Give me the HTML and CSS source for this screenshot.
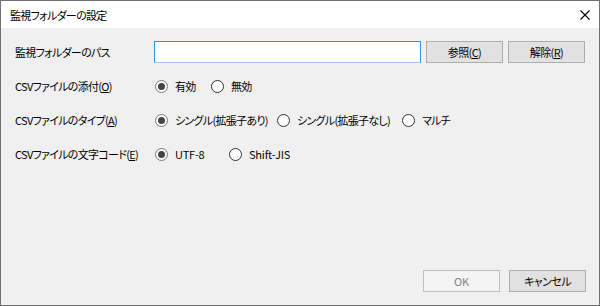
FILE: index.html
```html
<!DOCTYPE html>
<html lang="ja">
<head>
    <meta charset="UTF-8">
    <title>監視フォルダーの設定</title>
    <link rel="stylesheet" href="styles.css">
</head>
<body>
    <div class="dialog">
        <div class="titlebar">
            <span class="title">監視フォルダーの設定</span>
            <svg class="close" width="10" height="10" viewBox="0 0 10 10">
                <path d="M0.5 0.5 L9.5 9.5 M9.5 0.5 L0.5 9.5" stroke="#000" stroke-width="1.1" fill="none"/>
            </svg>
        </div>

        <div class="content">
            <div class="form">
                <div class="row">
                    <span class="label">監視フォルダーのパス</span>
                    <div class="controls">
                        <input class="path-input" type="text">
                        <button class="btn">参照(<u>C</u>)</button>
                        <button class="btn">解除(<u>R</u>)</button>
                    </div>
                </div>

                <div class="row">
                    <span class="label">CSVファイルの添付(<u>O</u>)</span>
                    <div class="controls">
                        <label class="choice w-yes"><span class="radio checked"></span>有効</label>
                        <label class="choice"><span class="radio"></span>無効</label>
                    </div>
                </div>

                <div class="row">
                    <span class="label">CSVファイルのタイプ(<u>A</u>)</span>
                    <div class="controls">
                        <label class="choice w-single1"><span class="radio checked"></span>シングル(拡張子あり)</label>
                        <label class="choice w-single2"><span class="radio"></span>シングル(拡張子なし)</label>
                        <label class="choice"><span class="radio"></span>マルチ</label>
                    </div>
                </div>

                <div class="row">
                    <span class="label">CSVファイルの文字コード(<u>E</u>)</span>
                    <div class="controls">
                        <label class="choice w-utf"><span class="radio checked"></span><span class="latin">UTF-8</span></label>
                        <label class="choice"><span class="radio"></span><span class="latin">Shift-JIS</span></label>
                    </div>
                </div>
            </div>

            <div class="footer">
                <button class="btn btn-disabled"><span class="latin">OK</span></button>
                <button class="btn">キャンセル</button>
            </div>
        </div>
    </div>
</body>
</html>
```

FILE: styles.css
```css
* {
    margin: 0;
    padding: 0;
    box-sizing: border-box;
}

body {
    font-family: "Noto Sans CJK JP", "Noto Sans", sans-serif;
    font-size: 11px;
    letter-spacing: -0.7px;
    font-feature-settings: "palt";
    color: #000;
    background: #fff;
}

.latin {
    letter-spacing: -0.2px;
}

.dialog {
    width: 600px;
    height: 306px;
    border: 1px solid #707070;
    background: #f0f0f0;
    display: flex;
    flex-direction: column;
}

.titlebar {
    height: 27px;
    background: #fff;
    display: flex;
    align-items: center;
    justify-content: space-between;
    padding: 0 9px 0 9px;
}

.close {
    display: block;
}

.content {
    flex: 1;
    display: flex;
    flex-direction: column;
    justify-content: space-between;
    padding: 13px 13px 13px 14px;
}

.form {
    display: flex;
    flex-direction: column;
    gap: 12px;
}

.row {
    display: flex;
    align-items: center;
    height: 22px;
    white-space: nowrap;
}

.label {
    width: 139px;
    flex-shrink: 0;
}

.controls {
    display: flex;
    align-items: center;
}

.path-input {
    width: 267px;
    height: 22px;
    border: 1px solid #3e8ee0;
    border-bottom-color: #9fc6ee;
    background: #fff;
    outline: none;
    margin-right: 5px;
}

.btn {
    width: 77px;
    height: 22px;
    background: #e1e1e1;
    border: 1px solid #adadad;
    font-family: inherit;
    font-size: 11px;
    letter-spacing: -0.6px;
    font-feature-settings: "palt";
    color: #000;
    margin-right: 5px;
}

.btn:last-child {
    margin-right: 0;
}

.btn-disabled {
    background: #f4f4f4;
    border-color: #bfbfbf;
    color: #838383;
}

.choice {
    display: flex;
    align-items: center;
}

.w-yes { width: 56px; }
.w-single1 { width: 122px; }
.w-single2 { width: 125px; }
.w-utf { width: 74px; }

.radio {
    width: 13px;
    height: 13px;
    border: 1px solid #333;
    border-radius: 50%;
    background: #fff;
    display: flex;
    align-items: center;
    justify-content: center;
    margin: 0 7px 0 1px;
    flex-shrink: 0;
}

.radio.checked {
    border-color: #777;
}

.radio.checked::after {
    content: "";
    width: 7px;
    height: 7px;
    border-radius: 50%;
    background: #444;
}

.footer {
    display: flex;
    justify-content: flex-end;
    gap: 9px;
}

.footer .btn {
    margin-right: 0;
}
```
